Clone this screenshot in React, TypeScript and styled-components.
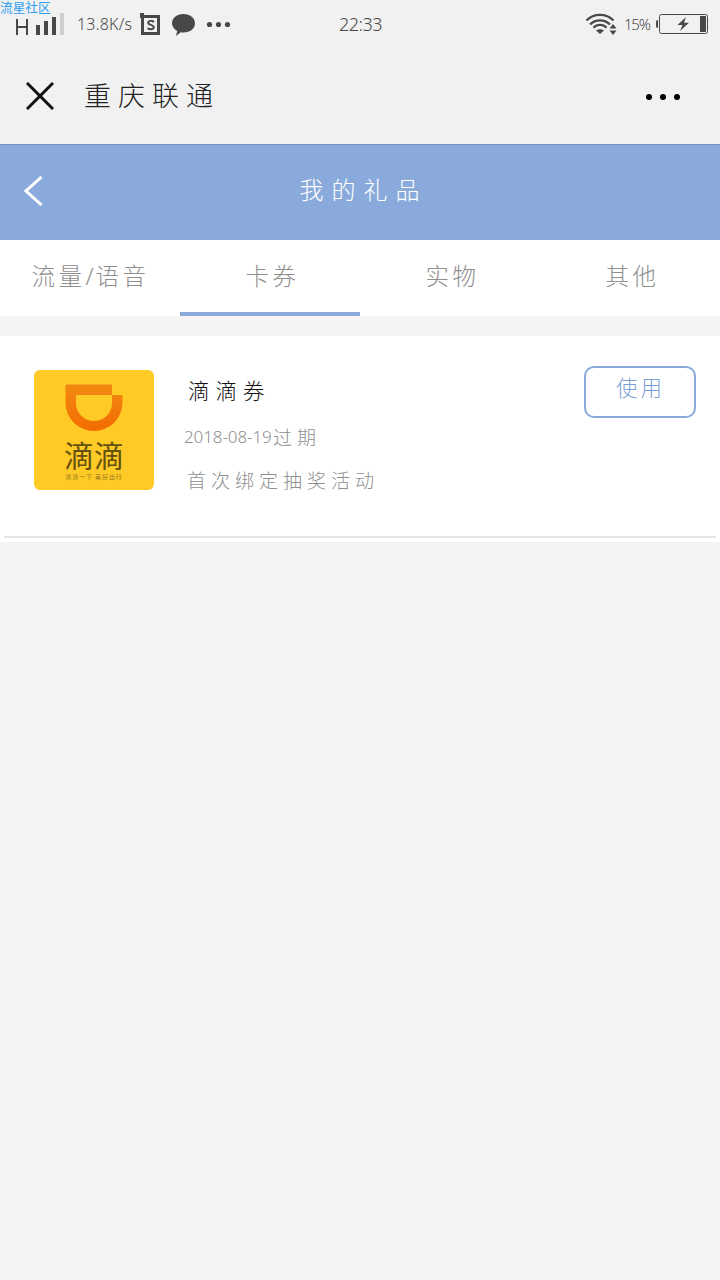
import React from 'react';
import styled, { createGlobalStyle } from 'styled-components';

const GlobalStyle = createGlobalStyle`
  * { box-sizing: border-box; }
  body {
    margin: 0;
    background: #f5f4f3;
    font-family: "Noto Sans CJK SC", sans-serif;
    font-weight: 300;
  }
`;

const Page = styled.div`
  width: 720px;
  min-height: 1280px;
  position: relative;
  background: #f5f4f3;
  overflow: hidden;
`;

const Watermark = styled.span`
  position: absolute;
  left: 0;
  top: 0;
  font-size: 12.7px;
  line-height: 13px;
  font-weight: 400;
  color: #2f9ff0;
  white-space: nowrap;
`;

const StatusBar = styled.div`
  height: 48px;
  padding: 0 12px 0 16px;
  display: grid;
  grid-template-columns: 1fr auto 1fr;
  align-items: center;
  background: #f1f1f1;
  color: #484848;
`;

const StatusGroup = styled.div<{ $end?: boolean }>`
  height: 48px;
  display: flex;
  align-items: center;
  justify-content: ${p => (p.$end ? 'flex-end' : 'flex-start')};
`;

const StatusText = styled.span<{ $size: number; $width: number; $track?: number }>`
  width: ${p => p.$width}px;
  font-family: "Noto Sans", "Open Sans", sans-serif;
  font-size: ${p => p.$size}px;
  line-height: 24px;
  letter-spacing: ${p => p.$track ?? 0}px;
  white-space: nowrap;
`;

const Speed = styled(StatusText)`
  padding-left: 11px;
`;

const Clock = styled(StatusText)`
  margin-left: -2px;
`;

const Percent = styled(StatusText)`
  margin-left: 7px;
`;

const Icon = styled.svg`
  display: block;
  flex: none;
`;

const BackIcon = styled(Icon)`
  margin-bottom: 4px;
`;

const MoreIcon = styled(Icon)`
  margin-top: 2px;
`;

const TitleBar = styled.header`
  height: 96px;
  padding: 0 40px 0 26px;
  display: flex;
  align-items: center;
  background: #f1f1f1;
`;

const AppTitle = styled.h1`
  flex: 1;
  margin: 0 0 2px 30px;
  font-size: 27px;
  line-height: 40px;
  font-weight: 300;
  letter-spacing: 7px;
  color: #222;
`;

const PageHeader = styled.div`
  height: 96px;
  padding: 0 24px;
  display: grid;
  grid-template-columns: 20px 1fr 20px;
  align-items: center;
  border-top: 1px solid #7593bd;
  background: #89aadb;
`;

const PageTitle = styled.h2`
  margin: 0 0 8px 7px;
  text-align: center;
  font-size: 24px;
  line-height: 40px;
  font-weight: 300;
  letter-spacing: 8px;
  color: #fff;
`;

const Tabs = styled.nav`
  height: 76px;
  display: grid;
  grid-template-columns: repeat(4, 1fr);
  background: #fff;
`;

const Tab = styled.div<{ $active?: boolean }>`
  padding: 14px 0 0 5px;
  text-align: center;
  font-size: 23.5px;
  line-height: 42px;
  letter-spacing: 3.5px;
  color: #8f8f8f;
  border-bottom: 4px solid ${p => (p.$active ? '#89aadb' : '#fff')};
`;

const WideTab = styled(Tab)`
  padding-left: 1px;
`;

const Slash = styled.span`
  font-family: "Noto Sans", sans-serif;
  letter-spacing: 2px;
`;

const List = styled.main`
  height: 206px;
  margin-top: 20px;
  padding: 0 4px 4px;
  background: #fff;
`;

const Item = styled.article`
  height: 202px;
  padding: 30px 20px 0 30px;
  display: flex;
  align-items: flex-start;
  border-bottom: 2px solid #e5e5e5;
`;

const Logo = styled.div`
  width: 120px;
  height: 120px;
  margin-top: 4px;
  padding-top: 14px;
  flex: none;
  display: flex;
  flex-direction: column;
  align-items: center;
  border-radius: 6px;
  background: #ffc926;
`;

const LogoName = styled.div`
  margin-top: 4px;
  font-size: 30px;
  line-height: 36px;
  font-weight: 400;
  color: #64500f;
`;

const LogoSlogan = styled.div`
  font-size: 6px;
  line-height: 9px;
  font-weight: 400;
  letter-spacing: 0.9px;
  white-space: nowrap;
  color: #98761a;
`;

const Info = styled.div`
  flex: 1;
  padding-left: 30px;
`;

const Name = styled.div`
  padding-left: 4px;
  margin-top: 4px;
  font-size: 21.5px;
  line-height: 40px;
  letter-spacing: 6px;
  color: #111;
`;

const Expiry = styled.div`
  display: flex;
  height: 40px;
  margin-top: 7px;
  font-size: 19px;
  line-height: 40px;
  letter-spacing: 5px;
  color: #8f8f8f;
`;

const DateText = styled.span`
  width: 89px;
  font-family: "Noto Sans", sans-serif;
  font-size: 17px;
  letter-spacing: -0.1px;
`;

const Detail = styled.div`
  padding-left: 3px;
  margin-top: 3px;
  font-size: 19px;
  line-height: 40px;
  letter-spacing: 5px;
  color: #8f8f8f;
`;

const UseButton = styled.button`
  width: 112px;
  height: 52px;
  padding: 0 0 11px 1px;
  border: 2px solid #89aadb;
  border-radius: 10px;
  background: #fff;
  font-family: inherit;
  font-size: 21.5px;
  font-weight: 300;
  line-height: 36px;
  letter-spacing: 3px;
  color: #7a9fd6;
`;

export default function App() {
  return (
    <>
      <GlobalStyle />
      <Page>
        <Watermark>流星社区</Watermark>
        <StatusBar>
          <StatusGroup>
            <Icon width="50" height="48" viewBox="16 0 50 48">
              <path d="M17 19V35M27 19V35M17 27H27" stroke="#484848" strokeWidth="2" fill="none" />
              <path d="M36 25h4v10h-4zM44 21h4v14h-4zM52 17h4v18h-4z" fill="#484848" />
              <path d="M60 13h4v22h-4z" fill="#d0d0d0" />
            </Icon>
            <Speed $size={16} $width={74} $track={0.2}>13.8K/s</Speed>
            <Icon width="92" height="48" viewBox="140 0 92 48">
              <path d="M140 13h4v2h16v20h-19V18h-1zM144 18v14h13V18z" fillRule="evenodd" fill="#484848" />
              <path d="M153.800 22.400C153 20.300 148.200 20.300 148.200 22.800C148.200 25.400 153.800 24.400 153.800 27.300C153.800 29.800 148.500 29.800 147.800 27.800" fill="none" stroke="#484848" strokeWidth="2" />
              <path d="M183.500 14c6.500 0 11.500 4 11.500 9.300s-5 9.300-11.500 9.300c-1 0-2-.1-2.800-.3L176 36l1.200-5.100c-3.200-1.700-5.200-4.400-5.200-7.600C172 18 177 14 183.500 14z" fill="#484848" />
              <g fill="#484848">
                <circle cx="209.500" cy="24.500" r="2.600" />
                <circle cx="218.500" cy="24.500" r="2.600" />
                <circle cx="227.500" cy="24.500" r="2.600" />
              </g>
            </Icon>
          </StatusGroup>
          <Clock $size={18} $width={44} $track={-0.5}>22:33</Clock>
          <StatusGroup $end>
            <Icon width="32" height="48" viewBox="585 0 32 48">
              <g fill="none" stroke="#484848" strokeWidth="2.200">
                <path d="M586.500 20.500C594 13 606 13 613.500 20.500" />
                <path d="M590 24.500C595.500 19 604.500 19 610 24.500" />
                <path d="M593.500 27.800C597 24 603 24 606.500 27.800" />
              </g>
              <path d="M596 30.500q4-2.500 8 0L600 34zM609.500 28.500l3.500-4.500 3.500 4.500zM609.500 30.500l3.500 4.500 3.500-4.500z" fill="#484848" />
            </Icon>
            <Percent $size={15} $width={31} $track={-1.2}>15%</Percent>
            <Icon width="53" height="48" viewBox="655 0 53 48">
              <path d="M658 20v8q-2 0-2-2v-4q0-2 2-2z" fill="#484848" />
              <rect x="659.500" y="14.500" width="48" height="19" rx="2" fill="none" stroke="#484848" />
              <path d="M700 16h6v16h-6zM686 17l-8.500 8h5l-2.500 6 9-8.300h-5z" fill="#484848" />
            </Icon>
          </StatusGroup>
        </StatusBar>
        <TitleBar>
          <Icon width="28" height="28" viewBox="0 0 28 28">
            <path d="M1 1L27 27M27 1L1 27" stroke="#111" strokeWidth="3" />
          </Icon>
          <AppTitle>重庆联通</AppTitle>
          <MoreIcon width="34" height="6" viewBox="0 0 34 6">
            <circle cx="3" cy="3" r="3" />
            <circle cx="17" cy="3" r="3" />
            <circle cx="31" cy="3" r="3" />
          </MoreIcon>
        </TitleBar>
        <PageHeader>
          <BackIcon width="20" height="30" viewBox="0 0 20 30">
            <path d="M17.500 1L2 15L17.500 29" fill="none" stroke="#fff" strokeWidth="3" />
          </BackIcon>
          <PageTitle>我的礼品</PageTitle>
        </PageHeader>
        <Tabs>
          <WideTab>流量<Slash>/</Slash>语音</WideTab>
          <Tab $active>卡券</Tab>
          <Tab>实物</Tab>
          <Tab>其他</Tab>
        </Tabs>
        <List>
          <Item>
            <Logo>
              <Icon width="58" height="48" viewBox="0 0 58 48">
                <defs>
                  <linearGradient id="cup" x1="0" y1="0" x2="0" y2="1">
                    <stop offset="0" stopColor="#f28a12" />
                    <stop offset="1" stopColor="#f36b00" />
                  </linearGradient>
                </defs>
                <path d="M2 .5H47V11H57.500V18.500A28.500 28.500 0 0 1 .500 18.500V2Q.500.500 2 .500zM11 11V19A18 18 0 0 0 47 19V11z" fillRule="evenodd" fill="url(#cup)" />
              </Icon>
              <LogoName>滴滴</LogoName>
              <LogoSlogan>滴滴一下 美好出行</LogoSlogan>
            </Logo>
            <Info>
              <Name>滴滴券</Name>
              <Expiry><DateText>2018-08-19</DateText>过期</Expiry>
              <Detail>首次绑定抽奖活动</Detail>
            </Info>
            <UseButton>使用</UseButton>
          </Item>
        </List>
      </Page>
    </>
  );
}
